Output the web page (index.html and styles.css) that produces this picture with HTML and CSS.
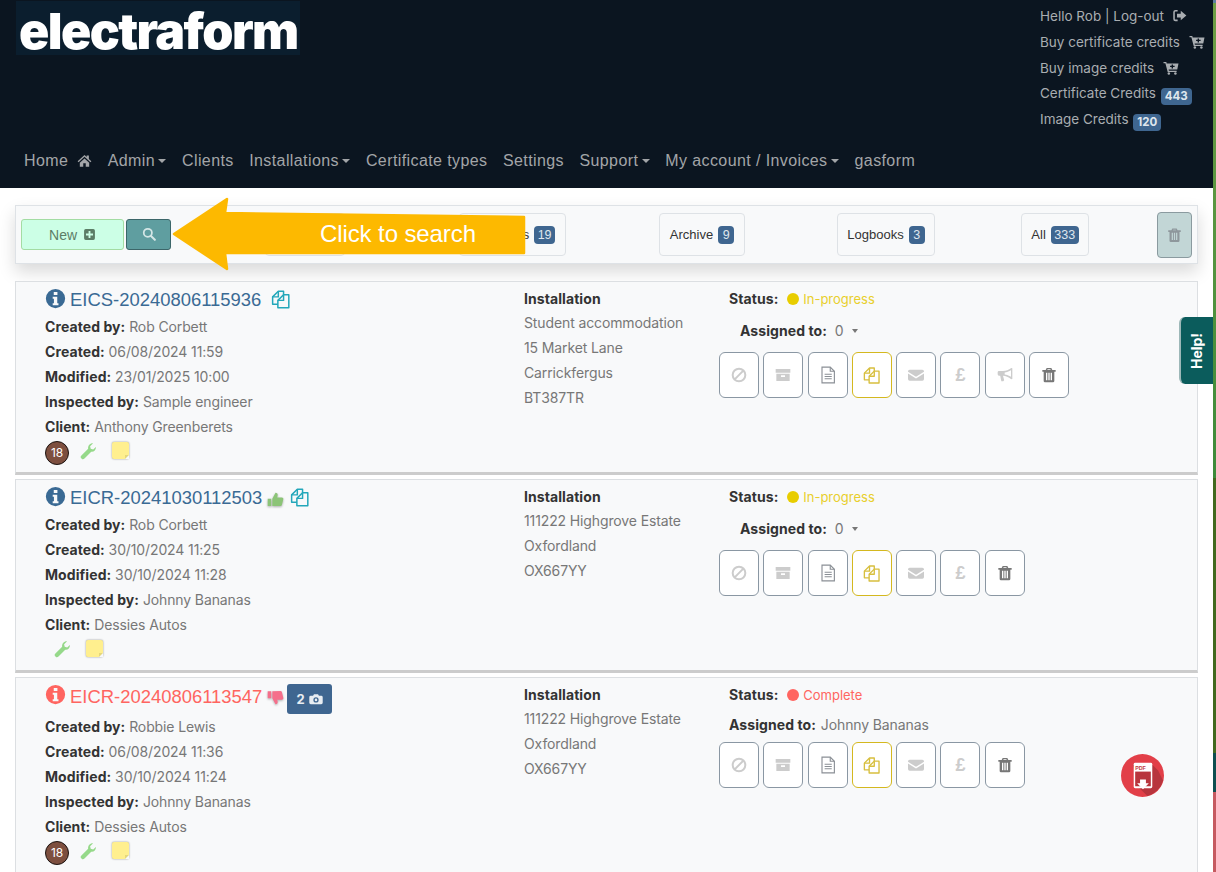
FILE: index.html
```html
<!DOCTYPE html>
<html lang="en">
<head>
<meta charset="utf-8">
<title>electraform</title>
<link rel="stylesheet" href="styles.css">
</head>
<body>
<svg class="sprite" aria-hidden="true">
  <symbol id="i-home" viewBox="0 0 24 24"><path d="M12 3 1 13l1.5 1.6L12 6l9.500 8.600L23 13l-4-3.600V4h-3.500v2.300zM4.500 15.500V22h5.500v-5.500h4V22h5.500v-6.500L12 8.700z"/></symbol>
  <symbol id="i-out" viewBox="0 0 24 24"><path d="M9 3H5.500A3.500 3.500 0 0 0 2 6.500v11A3.500 3.500 0 0 0 5.500 21H9v-2.500H5.500a1 1 0 0 1-1-1v-11a1 1 0 0 1 1-1H9z"/><path d="M14 4.500 23 12l-9 7.500V15H8V9h6z"/></symbol>
  <symbol id="i-cart" viewBox="0 0 24 24"><path fill-rule="evenodd" d="M0 3h4.500l.6 2.500H24L22 15H8.200l.4 2H21v2.200H6.700L3 5.200H0zM13 7v2.200h-2.500v2H13v2.300h2.200v-2.300h2.600v-2h-2.600V7z"/><circle cx="8.500" cy="21.500" r="2"/><circle cx="19" cy="21.500" r="2"/></symbol>
  <symbol id="i-plus" viewBox="0 0 24 24"><path fill-rule="evenodd" d="M5 2h14a3 3 0 0 1 3 3v14a3 3 0 0 1-3 3H5a3 3 0 0 1-3-3V5a3 3 0 0 1 3-3zm5.300 3.500v4.800H5.500v3.400h4.800v4.800h3.400v-4.800h4.800v-3.400h-4.800V5.500z"/></symbol>
  <symbol id="i-search" viewBox="0 0 24 24"><circle cx="10" cy="10" r="7" fill="none" stroke="currentColor" stroke-width="3"/><path d="m15 15 7 7" stroke="currentColor" stroke-width="3.500" stroke-linecap="round"/></symbol>
  <symbol id="i-info" viewBox="0 0 24 24"><path fill-rule="evenodd" d="M12 1a11 11 0 1 1 0 22 11 11 0 0 1 0-22zM10 4.500v3.500h4.200V4.500zM8.800 10v2.300h1.400v5.200H8.800v2.200h6.600v-2.200H14V10z"/></symbol>
  <symbol id="i-files" viewBox="0 0 24 24"><g fill="none" stroke="currentColor" stroke-width="1.700" stroke-linejoin="round"><path d="M15.500 6.500v-4H9.500L3 9v8.500h6"/><path d="M9.500 2.500V9H3"/><path d="M9 21.500V13l6.500-6.500h6v15z"/><path d="M15.500 6.500V13H9"/></g></symbol>
  <symbol id="i-up" viewBox="0 0 24 24"><path d="M1 11h5v10H1zM7.500 11 12 2.500c2.200 0 3.500 1.600 3 3.800L14.300 9H21c1.500 0 2.400 1.300 2 2.700l-2 8c-.3 1-1 1.500-2 1.500l-11.500-.2z"/></symbol>
  <symbol id="i-down" viewBox="0 0 24 24"><path d="M1 3h5v10H1zM7.500 13l4.500 8.500c2.200 0 3.500-1.600 3-3.800L14.300 15H21c1.500 0 2.400-1.300 2-2.700l-2-8c-.3-1-1-1.500-2-1.500L7.500 3z"/></symbol>
  <symbol id="i-cam" viewBox="0 0 24 24"><path fill-rule="evenodd" d="M8.500 4h7l1.500 2.500h4a2.500 2.500 0 0 1 2.500 2.500v9.500A2.500 2.500 0 0 1 21 21H3a2.500 2.500 0 0 1-2.500-2.500V9A2.500 2.500 0 0 1 3 6.500h4zM12 9a4.500 4.500 0 1 0 0 9 4.500 4.500 0 0 0 0-9zm0 2.300a2.200 2.200 0 1 1 0 4.400 2.200 2.200 0 0 1 0-4.400z"/></symbol>
  <symbol id="i-ban" viewBox="0 0 24 24"><circle cx="12" cy="12" r="9.500" fill="none" stroke="currentColor" stroke-width="3"/><path d="M5.500 18.500 18.500 5.500" stroke="currentColor" stroke-width="3"/></symbol>
  <symbol id="i-archive" viewBox="0 0 24 24"><path fill-rule="evenodd" d="M1 3h22v5.500H1zM2 10h20v11H2zm7 2.500V15h6v-2.500z"/></symbol>
  <symbol id="i-doc" viewBox="0 0 24 24"><g fill="none" stroke="currentColor" stroke-width="1.500"><path d="M4 1.500h11l5.500 5.500v15.500H4z"/><path d="M15 1.500V7h5.500M7.500 11h9.500M7.500 14h9.500M7.500 17h9.500"/></g></symbol>
  <symbol id="i-mail" viewBox="0 0 24 24"><path d="M0 6.500A2.500 2.500 0 0 1 2.500 4h19A2.500 2.500 0 0 1 24 6.500v.8l-12 7.500L0 7.300zM0 9.800l12 7.500 12-7.500v8.200a2.500 2.500 0 0 1-2.500 2.500h-19A2.500 2.500 0 0 1 0 18z"/></symbol>
  <symbol id="i-horn" viewBox="0 0 24 24"><path fill-rule="evenodd" d="M23 2v16l-1.500.5C17 15 13 13.500 9 13.300l1.800 6.700-1.500 1.500H6.500L4.800 13H3a2 2 0 0 1-2-2V8a2 2 0 0 1 2-2h6c4.500 0 8.500-1.700 12.500-4.500zM21 5c-3 1.900-6.500 3-9.500 3.400v2.900c3 .5 6.500 1.500 9.500 3.400z"/></symbol>
  <symbol id="i-trash" viewBox="0 0 24 24"><path fill-rule="evenodd" d="M8.500 1.500h7L17 4.500h5V7h-2v14a2 2 0 0 1-2 2H6a2 2 0 0 1-2-2V7H2V4.500h5zm.9 3h5.200l-.7-1H10zM7.500 8.500V20h2V8.500zm3.500 0V20h2V8.500zm3.500 0V20h2V8.500z"/></symbol>
  <symbol id="i-wrench" viewBox="0 0 24 24"><path d="M22.500 6.500c.6 3.600-2.300 7.200-6.200 6.600l-9 9a2.700 2.700 0 0 1-4-.1 2.700 2.700 0 0 1-.1-4l9-9C11.500 5 15 1.200 18.800 1.800l-4 4 .8 3.300 3.300.9z"/></symbol>
</svg>

<div class="page">
  <main class="main">
    <header class="header">
      <div class="top">
        <a class="logo">electraform</a>
        <ul class="user">
          <li>Hello Rob | Log-out <svg class="ic ic-out"><use href="#i-out"/></svg></li>
          <li>Buy certificate credits <svg class="ic ic-cart"><use href="#i-cart"/></svg></li>
          <li>Buy image credits <svg class="ic ic-cart"><use href="#i-cart"/></svg></li>
          <li>Certificate Credits <span class="badge badge-user">443</span></li>
          <li>Image Credits <span class="badge badge-user">120</span></li>
        </ul>
      </div>
      <nav class="nav">
        <a>Home <svg class="ic ic-home"><use href="#i-home"/></svg></a>
        <a class="drop">Admin</a>
        <a>Clients</a>
        <a class="drop">Installations</a>
        <a>Certificate types</a>
        <a>Settings</a>
        <a class="drop">Support</a>
        <a class="drop">My account / Invoices</a>
        <a>gasform</a>
      </nav>
    </header>

    <section class="bar">
      <div class="bar-start">
        <button class="btn-new">New <svg class="ic ic-plus"><use href="#i-plus"/></svg></button>
        <button class="btn-search"><svg class="ic ic-search"><use href="#i-search"/></svg></button>
      </div>
      <div class="pill pill-hidden"></div>
      <div class="pill">Templates <span class="badge">19</span></div>
      <div class="pill">Archive <span class="badge">9</span></div>
      <div class="pill">Logbooks <span class="badge">3</span></div>
      <div class="pill">All <span class="badge">333</span></div>
      <button class="btn-bin"><svg class="ic ic-bin"><use href="#i-trash"/></svg></button>
    </section>

    <article class="card">
      <div class="col-a">
        <div class="title">
          <svg class="ic ic-info"><use href="#i-info"/></svg>
          <a class="ref">EICS-20240806115936</a>
          <svg class="ic ic-copy ic-copy-a"><use href="#i-files"/></svg>
        </div>
        <p class="row"><b>Created by:</b> Rob Corbett</p>
        <p class="row"><b>Created:</b> 06/08/2024 11:59</p>
        <p class="row"><b>Modified:</b> 23/01/2025 10:00</p>
        <p class="row"><b>Inspected by:</b> Sample engineer</p>
        <p class="row"><b>Client:</b> Anthony Greenberets</p>
        <div class="marks">
          <span class="age">18</span>
          <svg class="ic ic-wrench"><use href="#i-wrench"/></svg>
          <span class="note"></span>
        </div>
      </div>
      <div class="col-b">
        <p class="row-head"><b>Installation</b></p>
        <p class="row">Student accommodation</p>
        <p class="row">15 Market Lane</p>
        <p class="row">Carrickfergus</p>
        <p class="row">BT387TR</p>
      </div>
      <div class="col-c">
        <p class="status status-on"><b>Status:</b> <span class="dot"></span><span class="status-val">In-progress</span></p>
        <p class="assign"><b>Assigned to:</b> <span class="assign-val">0</span><span class="caret"></span></p>
        <div class="actions">
          <button class="act"><svg class="ic ic-act"><use href="#i-ban"/></svg></button>
          <button class="act"><svg class="ic ic-act"><use href="#i-archive"/></svg></button>
          <button class="act act-doc"><svg class="ic ic-act"><use href="#i-doc"/></svg></button>
          <button class="act act-copy"><svg class="ic ic-act"><use href="#i-files"/></svg></button>
          <button class="act"><svg class="ic ic-act"><use href="#i-mail"/></svg></button>
          <button class="act act-pound">£</button>
          <button class="act"><svg class="ic ic-act"><use href="#i-horn"/></svg></button>
          <button class="act act-bin"><svg class="ic ic-act"><use href="#i-trash"/></svg></button>
        </div>
      </div>
    </article>

    <article class="card">
      <div class="col-a">
        <div class="title">
          <svg class="ic ic-info"><use href="#i-info"/></svg>
          <a class="ref">EICR-20241030112503</a>
          <svg class="ic ic-thumb ic-thumb-up"><use href="#i-up"/></svg>
          <svg class="ic ic-copy"><use href="#i-files"/></svg>
        </div>
        <p class="row"><b>Created by:</b> Rob Corbett</p>
        <p class="row"><b>Created:</b> 30/10/2024 11:25</p>
        <p class="row"><b>Modified:</b> 30/10/2024 11:28</p>
        <p class="row"><b>Inspected by:</b> Johnny Bananas</p>
        <p class="row"><b>Client:</b> Dessies Autos</p>
        <div class="marks marks-short">
          <svg class="ic ic-wrench"><use href="#i-wrench"/></svg>
          <span class="note"></span>
        </div>
      </div>
      <div class="col-b">
        <p class="row-head"><b>Installation</b></p>
        <p class="row">111222 Highgrove Estate</p>
        <p class="row">Oxfordland</p>
        <p class="row">OX667YY</p>
      </div>
      <div class="col-c">
        <p class="status status-on"><b>Status:</b> <span class="dot"></span><span class="status-val">In-progress</span></p>
        <p class="assign"><b>Assigned to:</b> <span class="assign-val">0</span><span class="caret"></span></p>
        <div class="actions">
          <button class="act"><svg class="ic ic-act"><use href="#i-ban"/></svg></button>
          <button class="act"><svg class="ic ic-act"><use href="#i-archive"/></svg></button>
          <button class="act act-doc"><svg class="ic ic-act"><use href="#i-doc"/></svg></button>
          <button class="act act-copy"><svg class="ic ic-act"><use href="#i-files"/></svg></button>
          <button class="act"><svg class="ic ic-act"><use href="#i-mail"/></svg></button>
          <button class="act act-pound">£</button>
          <button class="act act-bin"><svg class="ic ic-act"><use href="#i-trash"/></svg></button>
        </div>
      </div>
    </article>

    <article class="card card-done">
      <div class="col-a">
        <div class="title title-tall">
          <svg class="ic ic-info"><use href="#i-info"/></svg>
          <a class="ref">EICR-20240806113547</a>
          <svg class="ic ic-thumb ic-thumb-down"><use href="#i-down"/></svg>
          <span class="photos">2 <svg class="ic ic-cam"><use href="#i-cam"/></svg></span>
        </div>
        <p class="row"><b>Created by:</b> Robbie Lewis</p>
        <p class="row"><b>Created:</b> 06/08/2024 11:36</p>
        <p class="row"><b>Modified:</b> 30/10/2024 11:24</p>
        <p class="row"><b>Inspected by:</b> Johnny Bananas</p>
        <p class="row"><b>Client:</b> Dessies Autos</p>
        <div class="marks">
          <span class="age">18</span>
          <svg class="ic ic-wrench"><use href="#i-wrench"/></svg>
          <span class="note"></span>
        </div>
      </div>
      <div class="col-b">
        <p class="row-head"><b>Installation</b></p>
        <p class="row">111222 Highgrove Estate</p>
        <p class="row">Oxfordland</p>
        <p class="row">OX667YY</p>
      </div>
      <div class="col-c">
        <p class="status status-done"><b>Status:</b> <span class="dot"></span><span class="status-val">Complete</span></p>
        <p class="assign assign-static"><b>Assigned to:</b> <span class="assign-val">Johnny Bananas</span></p>
        <div class="actions actions-flush">
          <button class="act"><svg class="ic ic-act"><use href="#i-ban"/></svg></button>
          <button class="act"><svg class="ic ic-act"><use href="#i-archive"/></svg></button>
          <button class="act act-doc"><svg class="ic ic-act"><use href="#i-doc"/></svg></button>
          <button class="act act-copy"><svg class="ic ic-act"><use href="#i-files"/></svg></button>
          <button class="act"><svg class="ic ic-act"><use href="#i-mail"/></svg></button>
          <button class="act act-pound">£</button>
          <button class="act act-bin"><svg class="ic ic-act"><use href="#i-trash"/></svg></button>
        </div>
      </div>
      <svg class="pdf" viewBox="0 0 44 44">
        <circle cx="22" cy="22" r="22" fill="#e23f48"/>
        <path d="M30 9 38 17 43 27A22 22 0 0 1 27 43L19 35 12 11z" fill="#b8353d"/>
        <rect x="13" y="9" width="19" height="26" rx="1.500" fill="#fff"/>
        <rect x="14.500" y="18" width="16" height="15" fill="#b8353d"/>
        <text class="pdf-text" x="14.500" y="16">PDF</text>
        <path d="M19.500 26h6v4h3l-6 6-6-6h3z" fill="#fff"/>
      </svg>
    </article>
  </main>
  <div class="edge"></div>
</div>

<a class="help"><span class="help-text">Help!</span></a>

<svg class="arrow" viewBox="0 0 360 74">
  <path d="M2 37 55 2 53 16 352 20V56L53 56 55 72z" fill="#fdb900" stroke="#fdb900" stroke-width="2.500" stroke-linejoin="round"/>
</svg>
<span class="arrow-text">Click to search</span>
</body>
</html>
```
FILE: styles.css
```css
* { box-sizing: border-box; }
html, body { margin: 0; height: 872px; overflow: hidden; background: #fff; }
body { font: 14px/25px Inter, "Liberation Sans", sans-serif; letter-spacing: -.12px; color: #777; position: relative; }
p, ul { margin: 0; padding: 0; list-style: none; }
b { color: #333; font-weight: 700; letter-spacing: .08px; }
button { font: inherit; cursor: pointer; padding: 0; }
.sprite { display: none; }
.ic { fill: currentColor; display: inline-block; vertical-align: middle; flex: none; }

.page { display: flex; width: 1216px; height: 872px; overflow: hidden; }
.main { width: 1213px; flex: none; }
.edge { width: 3px; background: linear-gradient(#5e7fa0 0 3px, #6f9e45 3px, #3d8a3a 478px, #41691f 478px 753px, #0e4f50 753px 792px, #c65a60 792px); }

.header { height: 188px; background: #0b1520; display: flex; flex-direction: column; }
.top { display: flex; justify-content: space-between; height: 145px; }
.logo { margin: 1px 0 0 16px; width: 284px; height: 54px; background: #0b1e2e; color: #fff; padding-left: 3px; font: 900 50px/60px Inter, sans-serif; letter-spacing: -1.600px; white-space: nowrap; }
.user { width: 173px; padding-top: 4px; color: #a9adb1; font-size: 13.500px; line-height: 25.800px; letter-spacing: 0; white-space: nowrap; }
.ic-out { width: 15px; height: 15px; margin: -3px 0 0 4px; }
.ic-cart { width: 16px; height: 15px; margin: -3px 0 0 5px; }
.nav { display: flex; gap: 15.500px; padding-left: 24px; height: 32px; align-items: center; color: #a3a5a8; font: 16px/24px "Liberation Sans", sans-serif; letter-spacing: .4px; white-space: nowrap; }
.ic-home { width: 15px; height: 15px; margin: -3px 0 0 4px; }
.drop::after { content: ""; display: inline-block; margin-left: 3.500px; vertical-align: 3px; border-top: 4px solid; border-left: 4px solid transparent; border-right: 4px solid transparent; }

.badge { display: inline-block; min-width: 16px; padding: 0 3.500px; height: 18px; text-align: center; background: #3f6690; color: #dfe6ee; border-radius: 4px; font: 12.500px/18px "Liberation Sans", sans-serif; letter-spacing: 0; vertical-align: -1px; }
.badge-user { height: 17px; padding: 0 4px; font: 700 11.500px/17px Inter, sans-serif; margin-left: 1px; vertical-align: -2px; }

.bar { margin: 17px 15px; height: 59px; background: #f8f9fa; border: 1px solid #dee2e6; padding: 0 5px; box-shadow: 0 8px 16px rgba(0,0,0,.15); display: grid; grid-template-columns: 167px 234px 181px 198px 170px 168px 1fr; align-items: center; font: 13px/20px "Liberation Sans", sans-serif; letter-spacing: 0; color: #333; }
.bar-start { display: flex; gap: 2px; }
.btn-new { width: 103px; height: 31px; background: #ccffe6; border: 1px solid #a3dca3; border-radius: 3px; color: #5c7d66; font: 14px/20px "Liberation Sans", sans-serif; }
.ic-plus { width: 13px; height: 13px; margin: -2px 0 0 2px; }
.btn-search { width: 45px; height: 31px; background: #5f9ea0; border: 1px solid #3c6669; border-radius: 3px; color: #d4e6e6; }
.ic-search { width: 14px; height: 14px; margin-top: -2px; }
.pill { justify-self: center; height: 43px; display: flex; align-items: center; gap: 5px; padding: 0 9.500px; border: 1px solid #dee2e6; border-radius: 4px; }
.pill-hidden { width: 80px; }
.btn-bin { justify-self: end; width: 35px; height: 46px; background: #c2d6d6; border: 1px solid #8a9a9f; border-radius: 4px; color: #8e979c; }
.ic-bin { width: 15px; height: 16px; }

.card { position: relative; margin: 0 15px 4px; height: 194px; background: #f8f9fa; border: 1px solid #dcdfe2; border-bottom: 3px solid #ccc; padding: 4px 0 0 29px; display: grid; grid-template-columns: 479px 195px 1fr; }
.card-done { height: 260px; }
.title { height: 28px; display: flex; align-items: center; color: #3a6a94; white-space: nowrap; }
.title-tall { height: 32px; color: #ff6560; align-items: flex-start; }
.title-tall .ic-info { margin-top: 2px; }
.title-tall .ref { margin-top: 3px; }
.ref { font: 18.450px/24px "Liberation Sans", sans-serif; letter-spacing: 0; }
.ic-info { width: 21px; height: 21px; margin: -3px 4px 0 0; }
.ic-copy { width: 21px; height: 21px; color: #23a7ba; margin: -1px 0 0 5px; }
.ic-copy-a { margin-left: 9px; }
.ic-thumb { width: 17px; height: 17px; margin: 3px 0 0 5px; filter: drop-shadow(0 1px 1px rgba(0,0,0,.3)); }
.ic-thumb-up { color: #8cc477; }
.ic-thumb-down { color: #f56f8b; margin-top: 7px; }
.photos { margin: 2px 0 0 3px; width: 45px; height: 30px; background: #3f6690; color: #e8edf2; border-radius: 3px; font: 700 13px/30px Inter, sans-serif; text-align: center; }
.ic-cam { width: 14px; height: 14px; margin: -2px 0 0 2px; }
.row { height: 25px; white-space: nowrap; }
.row-head { height: 24px; }

.marks { display: flex; align-items: center; height: 25px; }
.marks-short { padding-left: 8px; }
.age { width: 24px; height: 24px; margin-top: 2px; border-radius: 50%; background: #7d4f3f; border: 1px solid #1c1411; color: #fff; font-size: 12px; line-height: 22px; text-align: center; }
.ic-wrench { width: 18px; height: 18px; margin: -2px 0 0 10px; color: #96d98a; }
.marks-short .ic-wrench { margin-left: 0; }
.note { position: relative; width: 17px; height: 17px; margin: -2px 0 0 15px; background: #ffef8e; border-radius: 2px; box-shadow: 0 0 2px rgba(0,0,0,.45); }
.note::after { content: ""; position: absolute; right: 0; bottom: 0; border: 2.500px solid; border-color: #e5d77a #f8f9fa #f8f9fa #e5d77a; }

.status { height: 25px; padding-left: 10px; white-space: nowrap; }
.status-on { color: #e8cf2c; }
.status-done { color: #ff6560; }
.status b { margin-right: 5px; }
.status-val { font-size: 13px; letter-spacing: 0; }
.dot { display: inline-block; width: 12px; height: 12px; margin-right: 4px; border-radius: 50%; background: currentColor; vertical-align: -1px; }
.status-on .dot { background: #e8cd00; }
.assign { height: 32px; margin-top: 4px; padding-left: 21px; line-height: 32px; white-space: nowrap; }
.assign b { margin-right: 4px; }
.assign-static { height: 35px; margin-top: 0; padding-left: 10px; line-height: 36px; }
.assign-static b { margin-right: 1px; }
.caret { display: inline-block; margin-left: 8px; vertical-align: 3px; border-top: 4px solid #777; border-left: 3.500px solid transparent; border-right: 3.500px solid transparent; }
.actions { margin-top: 5px; display: flex; gap: 4.300px; }
.actions-flush { margin-top: 0; }
.act { width: 40px; height: 46px; background: #fff; border: 1px solid #8a97a3; border-radius: 6px; color: #ccc; display: flex; align-items: center; justify-content: center; }
.ic-act { width: 16px; height: 16px; }
.act-doc { color: #8a8f95; }
.act-doc .ic-act { width: 18px; height: 18px; }
.act-copy { color: #d7bf3e; border-color: #d4b81f; }
.act-copy .ic-act { width: 19px; height: 19px; }
.act-bin { color: #777; }
.act-pound { font: 700 18px/1 "Liberation Sans", sans-serif; }

.pdf { position: absolute; left: 1105px; top: 76px; width: 43px; height: 43px; }
.pdf-text { font: 700 5.500px "Liberation Sans", sans-serif; letter-spacing: 0; fill: #c23a42; }

.help { position: absolute; left: 1179px; top: 317px; width: 34px; height: 67px; background: #0b5c5c; border-left: 2px solid #9db8b8; border-radius: 6px 0 0 6px; display: flex; align-items: center; justify-content: center; }
.help-text { display: block; transform: rotate(-90deg); color: #fff; font: 700 14px/20px Inter, sans-serif; letter-spacing: 0; }

.arrow { position: absolute; left: 172px; top: 197px; width: 360px; height: 74px; }
.arrow-text { position: absolute; left: 320px; top: 219px; color: #fff; font: 24px/30px "Liberation Sans", sans-serif; letter-spacing: -.1px; white-space: nowrap; }
```
